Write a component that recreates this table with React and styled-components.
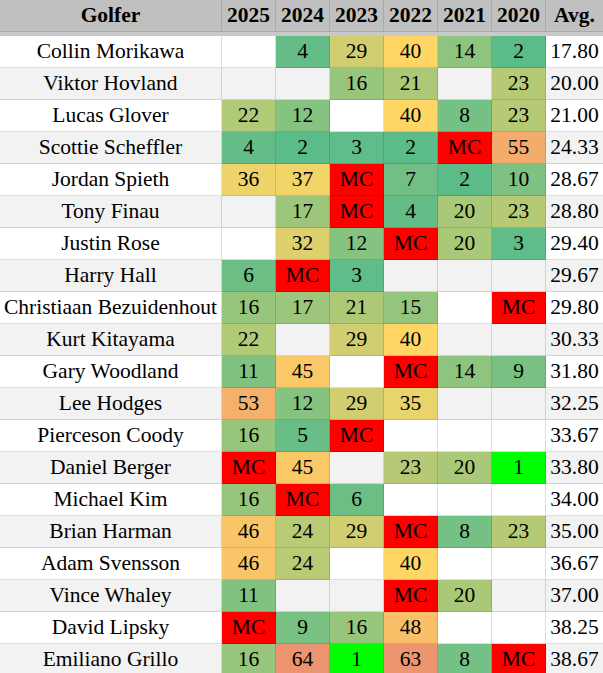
import React from "react";
import styled, { createGlobalStyle } from "styled-components";

const SERIF = `"Liberation Serif", Tinos, "Times New Roman", Times, serif`;

const GlobalStyle = createGlobalStyle`
  html, body { margin: 0; padding: 0; background: #ffffff; }
  body { font-family: ${SERIF}; overflow: hidden; }
`;

const YEARS = ["2025", "2024", "2023", "2022", "2021", "2020"];

const ROWS = [
  ["Collin Morikawa", "", 4, 29, 40, 14, 2, "17.80"],
  ["Viktor Hovland", "", "", 16, 21, "", 23, "20.00"],
  ["Lucas Glover", 22, 12, "", 40, 8, 23, "21.00"],
  ["Scottie Scheffler", 4, 2, 3, 2, "MC", 55, "24.33"],
  ["Jordan Spieth", 36, 37, "MC", 7, 2, 10, "28.67"],
  ["Tony Finau", "", 17, "MC", 4, 20, 23, "28.80"],
  ["Justin Rose", "", 32, 12, "MC", 20, 3, "29.40"],
  ["Harry Hall", 6, "MC", 3, "", "", "", "29.67"],
  ["Christiaan Bezuidenhout", 16, 17, 21, 15, "", "MC", "29.80"],
  ["Kurt Kitayama", 22, "", 29, 40, "", "", "30.33"],
  ["Gary Woodland", 11, 45, "", "MC", 14, 9, "31.80"],
  ["Lee Hodges", 53, 12, 29, 35, "", "", "32.25"],
  ["Pierceson Coody", 16, 5, "MC", "", "", "", "33.67"],
  ["Daniel Berger", "MC", 45, "", 23, 20, 1, "33.80"],
  ["Michael Kim", 16, "MC", 6, "", "", "", "34.00"],
  ["Brian Harman", 46, 24, 29, "MC", 8, 23, "35.00"],
  ["Adam Svensson", 46, 24, "", 40, "", "", "36.67"],
  ["Vince Whaley", 11, "", "", "MC", 20, "", "37.00"],
  ["David Lipsky", "MC", 9, 16, 48, "", "", "38.25"],
  ["Emiliano Grillo", 16, 64, 1, 63, 8, "MC", "38.67"],
];

const GREEN = [87, 187, 138];
const YELLOW = [255, 214, 102];
const RED = [230, 124, 115];

const mix = (a, b, t) => a.map((v, i) => Math.round(v + (b[i] - v) * t));

function cellColor(v) {
  if (v === "" || v === undefined) return null;
  if (v === "MC") return "#ff0000";
  if (v === 1) return "#00ff00";
  const n = Number(v);
  let c;
  if (n <= 40) c = mix(GREEN, YELLOW, Math.max(0, (n - 1) / 39));
  else c = mix(YELLOW, RED, Math.min(1, (n - 40) / 32));
  return `rgb(${c[0]}, ${c[1]}, ${c[2]})`;
}

const Table = styled.table`
  border-collapse: separate;
  border-spacing: 0;
  table-layout: fixed;
  width: 603px;
  font-family: ${SERIF};
  font-size: 21.5px;
  line-height: 1;
  color: #000;
`;

const HeadCell = styled.th`
  height: 31px;
  padding: 0;
  background: #c0c0c0;
  font-weight: bold;
  text-align: center;
  border-right: 1px solid #a9a9a9;
  border-bottom: 1px solid #a9a9a9;
  white-space: nowrap;
  overflow: hidden;
  &:last-child { border-right: none; }
`;

const GapCell = styled.td`
  height: 4px;
  padding: 0;
  background: #c9c9c9;
`;

const Row = styled.tr`
  background: ${(p) => (p.$striped ? "#f2f2f2" : "#ffffff")};
`;

const NameCell = styled.td`
  height: 31px;
  padding: 0;
  text-align: center;
  white-space: nowrap;
  overflow: hidden;
  border-right: 1px solid rgba(0, 0, 0, 0.13);
  border-bottom: 1px solid rgba(0, 0, 0, 0.13);
`;

const ScoreCell = styled.td`
  height: 31px;
  padding: 0;
  text-align: center;
  white-space: nowrap;
  background: ${(p) => p.$bg || "transparent"};
  border-right: 1px solid rgba(0, 0, 0, 0.13);
  border-bottom: 1px solid rgba(0, 0, 0, 0.13);
`;

const AvgCell = styled.td`
  height: 31px;
  padding: 0;
  text-align: center;
  white-space: nowrap;
  overflow: hidden;
  border-bottom: 1px solid rgba(0, 0, 0, 0.13);
`;

export default function App() {
  return (
    <>
      <GlobalStyle />
      <Table>
        <colgroup>
          <col style={{ width: 222 }} />
          {YEARS.map((y) => (
            <col key={y} style={{ width: 54 }} />
          ))}
          <col style={{ width: 57 }} />
        </colgroup>
        <thead>
          <tr>
            <HeadCell>Golfer</HeadCell>
            {YEARS.map((y) => (
              <HeadCell key={y}>{y}</HeadCell>
            ))}
            <HeadCell>Avg.</HeadCell>
          </tr>
          <tr>
            <GapCell colSpan={8} />
          </tr>
        </thead>
        <tbody>
          {ROWS.map((r, i) => (
            <Row key={r[0]} $striped={i % 2 === 1}>
              <NameCell>{r[0]}</NameCell>
              {r.slice(1, 7).map((v, j) => (
                <ScoreCell key={j} $bg={cellColor(v)}>
                  {v}
                </ScoreCell>
              ))}
              <AvgCell>{r[7]}</AvgCell>
            </Row>
          ))}
        </tbody>
      </Table>
    </>
  );
}
